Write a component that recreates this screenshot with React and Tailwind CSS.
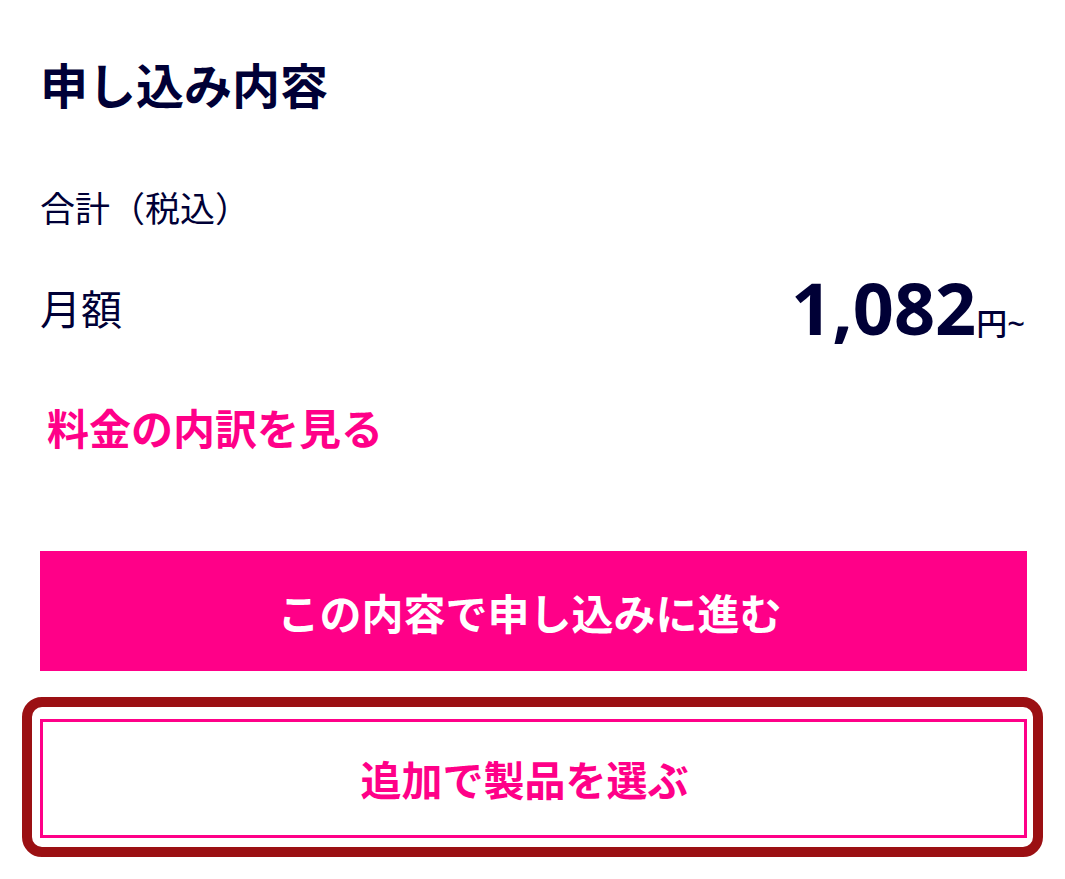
export default function App() {
  const jp = { fontFamily: '"Noto Sans CJK JP", "Noto Sans", sans-serif' };
  const num = { fontFamily: '"Noto Sans", "Noto Sans CJK JP", sans-serif' };
  return (
    <div className="w-[1065px] h-[879px] bg-white overflow-hidden" style={jp}>
      <div className="pl-[40px] pr-[38px] pt-[59px]">
        <h2 className="text-[48px] leading-[48px] font-bold text-[#000036]">申し込み内容</h2>
        <div className="mt-[82px] text-[35px] leading-[35px] text-[#000036]">合計（税込）</div>
        <div className="mt-[47px] h-[72px] flex items-center justify-between text-[#000036]">
          <span className="text-[41px] leading-[41px]">月額</span>
          <span className="h-[72px] flex items-baseline pr-[2px]">
            <span className="text-[72px] leading-[72px] font-bold" style={num}>1,082</span>
            <span className="text-[31px] leading-[31px] font-medium">円</span>
            <span className="text-[31px] leading-[31px] font-medium" style={num}>~</span>
          </span>
        </div>
        <div className="mt-[63px] pl-[7px] text-[42px] leading-[42px] font-bold text-[#ff0088]">料金の内訳を見る</div>
        <button className="mt-[103px] w-[987px] h-[120px] pr-[8px] bg-[#ff0088] text-white text-[42px] font-bold flex items-center justify-center">
          この内容で申し込みに進む
        </button>
        <div className="relative mt-[48px] w-[987px]">
          <div className="absolute -left-[18px] -top-[22px] -right-[16px] -bottom-[19px] border-[10px] border-[#9b1013] rounded-[20px] pointer-events-none"></div>
          <button className="w-[987px] h-[119px] pr-[18px] border-[3px] border-[#ff0088] bg-white text-[#ff0088] text-[41px] font-bold flex items-center justify-center">
            追加で製品を選ぶ
          </button>
        </div>
      </div>
    </div>
  );
}
